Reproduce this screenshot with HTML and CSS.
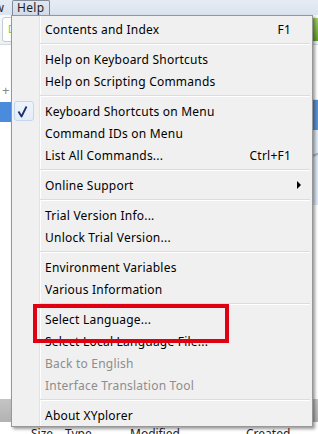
FILE: index.html
```html
<!DOCTYPE html>
<html lang="en">
<head>
    <meta charset="UTF-8">
    <meta name="viewport" content="width=device-width, initial-scale=1.0">
    <title>XYplorer - Help menu</title>
    <link rel="stylesheet" href="styles.css">
</head>
<body>
    <div class="app">
        <div class="menubar">
            <span class="mi mi-view">View</span>
            <span class="mi open">Help</span>
        </div>

        <div class="toolbar">
            <div class="address"><span class="addr-icon">D</span></div>
            <div class="tool-icon"></div>
        </div>

        <div class="panes">
            <div class="tree">
                <div class="trow"><span class="plus">+</span></div>
                <div class="trow selected"></div>
                <div class="trow"></div>
            </div>
            <div class="list">
                <div class="lrow"></div>
                <div class="lrow selected"></div>
                <div class="preview"></div>
            </div>
        </div>

        <div class="band"></div>

        <div class="colheader">
            <span class="col col-size">Size</span>
            <span class="col col-type">Type</span>
            <span class="col col-mod">Modified</span>
            <span class="col col-created">Created</span>
        </div>
    </div>

    <!-- the open Help menu lies over the window -->
    <div class="menu">
        <div class="item"><span class="label">Contents and Index</span><span class="key">F1</span></div>
        <div class="sep"></div>
        <div class="item"><span class="label">Help on Keyboard Shortcuts</span></div>
        <div class="item"><span class="label">Help on Scripting Commands</span></div>
        <div class="sep"></div>
        <div class="item">
            <span class="check">
                <svg width="20" height="20" viewBox="0 0 20 20"><path d="M4.5 10.5 L7.5 15.5 L12.5 5.5" fill="none" stroke="#1b2f6e" stroke-width="1.8" stroke-linejoin="round"/></svg>
            </span>
            <span class="label">Keyboard Shortcuts on Menu</span>
        </div>
        <div class="item"><span class="label">Command IDs on Menu</span></div>
        <div class="item"><span class="label">List All Commands...</span><span class="key">Ctrl+F1</span></div>
        <div class="sep"></div>
        <div class="item"><span class="label">Online Support</span><span class="arrow"></span></div>
        <div class="sep"></div>
        <div class="item"><span class="label">Trial Version Info...</span></div>
        <div class="item"><span class="label">Unlock Trial Version...</span></div>
        <div class="sep"></div>
        <div class="item"><span class="label">Environment Variables</span></div>
        <div class="item"><span class="label">Various Information</span></div>
        <div class="sep"></div>
        <div class="item"><span class="label">Select Language...</span></div>
        <div class="item"><span class="label">Select Local Language File...</span></div>
        <div class="item disabled"><span class="label">Back to English</span></div>
        <div class="item disabled"><span class="label">Interface Translation Tool</span></div>
        <div class="sep"></div>
        <div class="item"><span class="label">About XYplorer</span></div>
    </div>

    <div class="mark"></div>
</body>
</html>
```

FILE: styles.css
```css
html, body {
    margin: 0;
    padding: 0;
}
body {
    width: 318px;
    height: 434px;
    overflow: hidden;
    position: relative;
    font-family: "Noto Sans", "Open Sans", sans-serif;
    font-size: 12px;
    color: #000;
    background: #fff;
}

/* window behind the menu */
.menubar {
    height: 15px;
    display: flex;
    align-items: stretch;
    background: linear-gradient(#e6ecf4, #dae3ee);
    color: #1e1e1e;
}
.mi {
    display: flex;
    align-items: center;
    white-space: nowrap;
    line-height: 14px;
}
.mi-view {
    width: 4px;
    justify-content: flex-end;
}
.mi.open {
    margin-left: 8px;
    width: 38px;
    padding-left: 4px;
    box-sizing: border-box;
    border: 1px solid #7d8a99;
    border-bottom: none;
    border-radius: 2px 2px 0 0;
    background: linear-gradient(#e1e7ef, #d3dce7);
    letter-spacing: 0.3px;
}
.toolbar {
    height: 30px;
    display: flex;
    justify-content: space-between;
    align-items: center;
    background: linear-gradient(#f7f9fc, #edf1f6);
    border-bottom: 1px solid #d5dbe3;
    box-sizing: border-box;
}
.address {
    margin-left: 2px;
    width: 120px;
    height: 25px;
    background: #fff;
    border: 1px solid #c7ccd3;
    border-radius: 3px;
    box-sizing: border-box;
}
.addr-icon {
    display: block;
    margin: 4px 0 0 5px;
    color: #8cbf3c;
    font-size: 10px;
}
.tool-icon {
    width: 12px;
    height: 23px;
    background: linear-gradient(#9ed25d, #5e9f28);
    border-radius: 3px 0 0 3px;
}
.panes {
    height: 352px;
    display: grid;
    grid-template-columns: 160px 1fr;
}
.tree {
    padding-top: 37px;
    background: #fff;
}
.trow {
    height: 20px;
    position: relative;
}
.trow.selected {
    background: #4a8bdb;
}
.plus {
    position: absolute;
    left: 2px;
    top: -1px;
    color: #8a8a8a;
    font-size: 13px;
    line-height: 18px;
}
.list {
    padding-top: 30px;
    background: #fff;
    border-left: 1px solid #dde2e8;
}
.lrow {
    height: 25px;
    border-bottom: 1px solid #e3e7ec;
    box-sizing: border-box;
}
.lrow.selected {
    height: 30px;
    background: #5b91d4;
    border-bottom: none;
}
.preview {
    height: 75px;
    background: linear-gradient(160deg, #dce9f8 60%, #9aa6b3 61%, #dce9f8 63%);
}
.band {
    height: 23px;
    margin-top: 2px;
    background: linear-gradient(#c4c4c4, #b2b2b2);
}
.colheader {
    position: relative;
    height: 20px;
    color: #222;
}
.col {
    position: absolute;
    top: 3px;
}
.col-size { left: 31px; }
.col-type { left: 65px; }
.col-mod { left: 130px; }
.col-created { left: 246px; }

/* popup menu */
.menu {
    position: absolute;
    left: 11px;
    top: 15px;
    width: 302px;
    box-sizing: border-box;
    padding: 2px 2px 0;
    border: 1px solid #979797;
    background: linear-gradient(to right, transparent 27px, #e2e3e3 27px, #e2e3e3 28px, #fff 28px, #fff 29px, transparent 29px), #f0f0f0;
    box-shadow: 2px 2px 3px rgba(0, 0, 0, 0.4);
}
.item {
    position: relative;
    height: 22px;
    display: flex;
    align-items: center;
    padding: 0 19px 0 31px;
    white-space: nowrap;
    letter-spacing: 0.22px;
}
.item .label {
    flex: 1;
}
.item.disabled {
    color: #8d8d8d;
}
.check {
    position: absolute;
    left: 0;
    top: 1px;
    width: 20px;
    height: 20px;
    box-sizing: border-box;
    border: 1px solid #c2d6ef;
    border-radius: 3px;
    background: linear-gradient(#eef4fc, #e4ecf8);
}
.check svg {
    position: absolute;
    left: 0;
    top: 0;
    margin: -1px;
}
.arrow {
    width: 0;
    height: 0;
    margin-right: -10px;
    border-top: 4px solid transparent;
    border-bottom: 4px solid transparent;
    border-left: 4px solid #000;
}
.sep {
    height: 8px;
    margin-left: 26px;
    background: linear-gradient(transparent 3px, #dcdcdc 3px, #dcdcdc 4px, #fff 4px, #fff 5px, transparent 5px);
}

/* red annotation box */
.mark {
    position: absolute;
    left: 33px;
    top: 304px;
    width: 196px;
    height: 39px;
    box-sizing: border-box;
    border: 4px solid #e00012;
}
```
